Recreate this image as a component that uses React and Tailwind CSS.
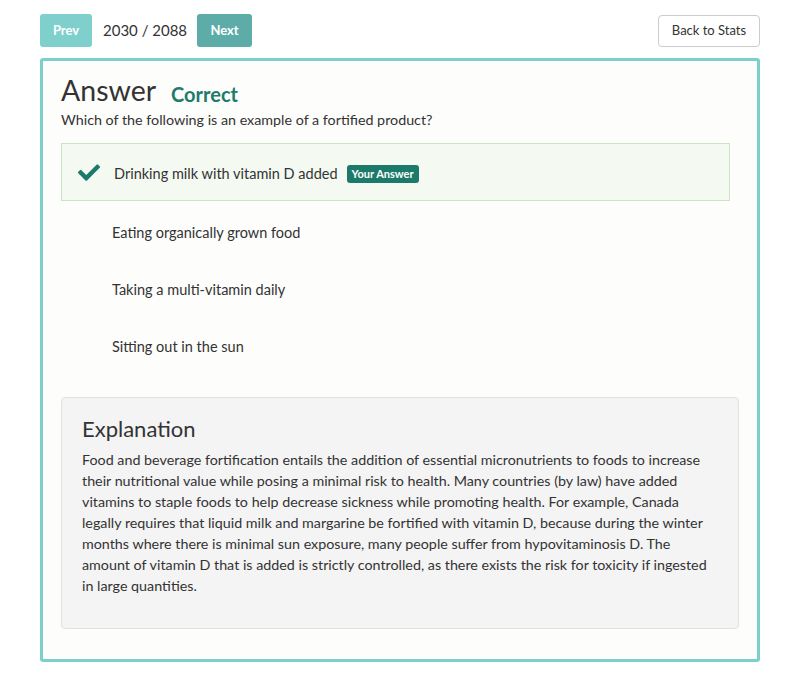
export default function App() {
  const font = { fontFamily: 'Lato, "Open Sans", sans-serif' };
  const options = [
    "Eating organically grown food",
    "Taking a multi-vitamin daily",
    "Sitting out in the sun",
  ];
  return (
    <div className="min-h-[685px] w-[800px] bg-white text-[#333]" style={font}>
      <div className="px-10 pt-[14px]">
        <div className="flex items-end justify-between">
          <div className="flex items-center">
            <button className="h-[33px] w-[52px] rounded-[3px] bg-[#7fcfcd] text-[13px] font-bold text-white">Prev</button>
            <span className="ml-[11px] text-[15px] text-[#333]">2030 / 2088</span>
            <button className="ml-[10px] h-[33px] w-[55px] rounded-[3px] bg-[#5eaca8] text-[13px] font-bold text-white">Next</button>
          </div>
          <button className="h-[32px] w-[102px] rounded-[4px] border border-[#cccccc] bg-white text-[13px] text-[#333]">Back to Stats</button>
        </div>
        <div className="mt-[11px] rounded-[3px] border-[3px] border-[#7ccfcc] bg-[#fdfdfb] px-[18px] pb-[30px] pt-[10px]">
          <div className="flex items-end">
            <h1 className="text-[28.5px] leading-[38px] text-[#333]">Answer</h1>
            <span className="mb-[2px] ml-[15px] text-[20px] font-bold leading-[26px] text-[#217b6b]">Correct</span>
          </div>
          <p className="mt-[1px] text-[14.3px] leading-[20px] text-[#333]">Which of the following is an example of a fortified product?</p>
          <div className="mt-[13px] mr-[9px]">
            <div className="flex h-[58px] items-center border border-[#cde3c8] bg-[#f4faf2] pl-[16px] pt-[4px]">
              <svg width="22" height="17" viewBox="0 0 512 390" className="-mt-[4px] text-[#1b7a6a]">
                <path fill="currentColor" d="M173.9 380.4L7.5 214c-10-10-10-26.2 0-36.2l36.2-36.2c10-10 26.2-10 36.2 0L192 253.7 432.1 13.6c10-10 26.2-10 36.2 0l36.2 36.2c10 10 10 26.2 0 36.2L210.1 380.4c-10 10-26.2 10-36.2 0z" />
              </svg>
              <span className="ml-[14px] text-[14.5px] text-[#333]">Drinking milk with vitamin D added</span>
              <span className="ml-[9px] rounded-[3px] bg-[#1b7a6a] px-[5px] py-[2px] text-[11px] font-bold leading-[14px] text-white">Your Answer</span>
            </div>
            {options.map((o) => (
              <div key={o} className="flex h-[57px] items-center pl-[51px] pt-[7px]">
                <span className="text-[14.5px] text-[#333]">{o}</span>
              </div>
            ))}
          </div>
          <div className="mt-[25px] rounded-[4px] border border-[#e1e1e1] bg-[#f4f4f4] px-[20px] pb-[32px] pt-[16px]">
            <h2 className="text-[22px] leading-[30px] text-[#333]">Explanation</h2>
            <p className="mt-[5px] text-[14.3px] leading-[21px] text-[#333]">
              Food and beverage fortification entails the addition of essential micronutrients to foods to increase their nutritional value while posing a minimal risk to health. Many countries (by law) have added vitamins to staple foods to help decrease sickness while promoting health. For example, Canada legally requires that liquid milk and margarine be fortified with vitamin D, because during the winter months where there is minimal sun exposure, many people suffer from hypovitaminosis D. The amount of vitamin D that is added is strictly controlled, as there exists the risk for toxicity if ingested in large quantities.
            </p>
          </div>
        </div>
      </div>
    </div>
  );
}
